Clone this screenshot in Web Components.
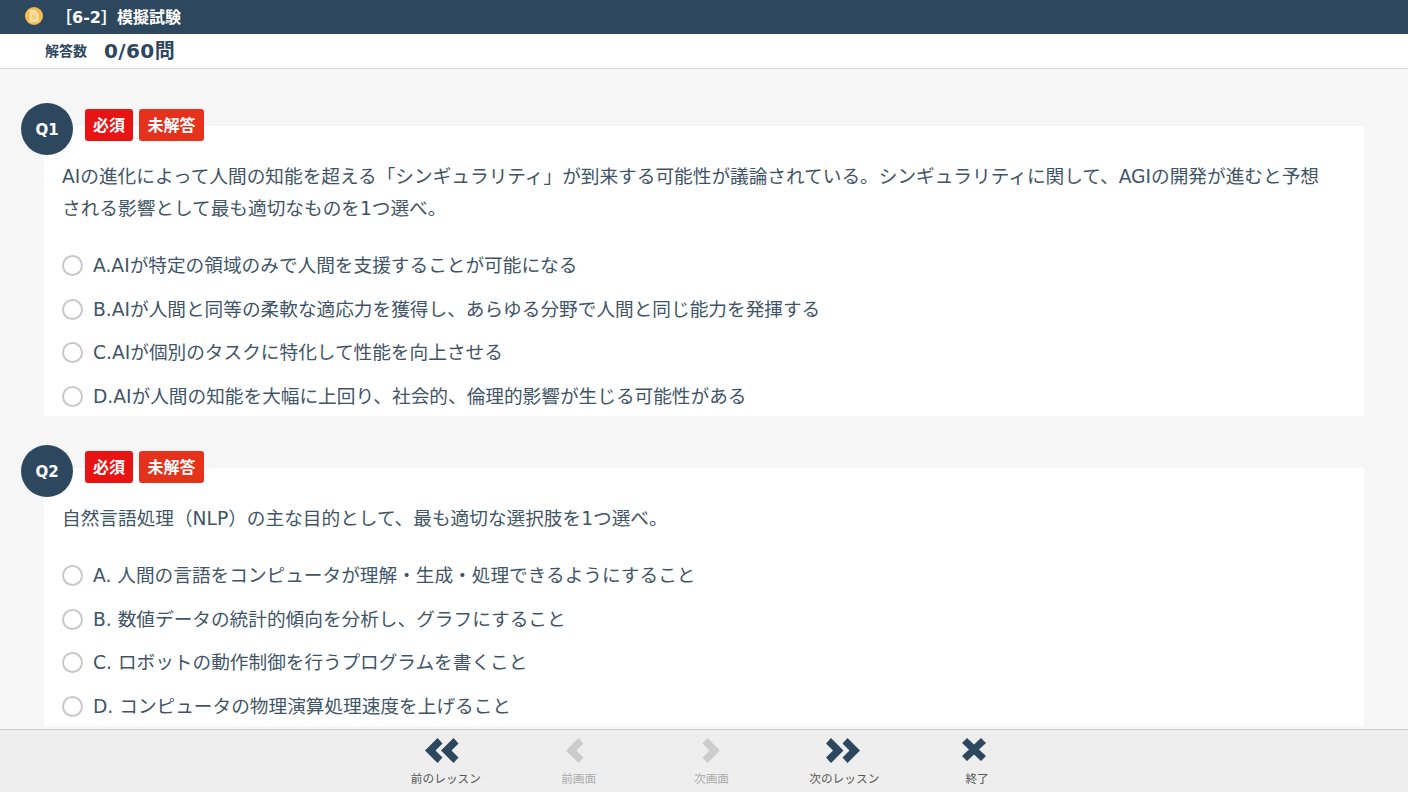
<!DOCTYPE html>
<html lang="ja">
<head>
<meta charset="utf-8">
<title>模擬試験</title>
<style>
  html, body { margin: 0; height: 100%; overflow: hidden; }
  body { font-family: "DejaVu Sans", "Noto Sans CJK JP", sans-serif; color: #2c475e; background: #f6f6f6; }
  exam-app { height: 100vh; }
</style>
</head>
<body>
<exam-app>
  <exam-header slot="header" title-text="［6-2］模擬試験" answered="0/60問"></exam-header>
  <quiz-question number="Q1">
    <span slot="text">AIの進化によって人間の知能を超える「シンギュラリティ」が到来する可能性が議論されている。シンギュラリティに関して、AGIの開発が進むと予想される影響として最も適切なものを1つ選べ。</span>
    <quiz-option>A.AIが特定の領域のみで人間を支援することが可能になる</quiz-option>
    <quiz-option>B.AIが人間と同等の柔軟な適応力を獲得し、あらゆる分野で人間と同じ能力を発揮する</quiz-option>
    <quiz-option>C.AIが個別のタスクに特化して性能を向上させる</quiz-option>
    <quiz-option>D.AIが人間の知能を大幅に上回り、社会的、倫理的影響が生じる可能性がある</quiz-option>
  </quiz-question>
  <quiz-question number="Q2">
    <span slot="text">自然言語処理（NLP）の主な目的として、最も適切な選択肢を1つ選べ。</span>
    <quiz-option>A. 人間の言語をコンピュータが理解・生成・処理できるようにすること</quiz-option>
    <quiz-option>B. 数値データの統計的傾向を分析し、グラフにすること</quiz-option>
    <quiz-option>C. ロボットの動作制御を行うプログラムを書くこと</quiz-option>
    <quiz-option>D. コンピュータの物理演算処理速度を上げること</quiz-option>
  </quiz-question>
  <exam-footer slot="footer"></exam-footer>
</exam-app>

<script>
class ExamApp extends HTMLElement {
  constructor() {
    super();
    this.attachShadow({ mode: 'open' });
  }

  connectedCallback() {
    this.shadowRoot.innerHTML = `
      <style>
        :host { display: flex; flex-direction: column; }
        main {
          flex: 1;
          min-height: 0;
          overflow: hidden;
          padding: 57px 44px 0;
          display: flex;
          flex-direction: column;
          gap: 52px;
        }
      </style>
      <slot name="header"></slot>
      <main><slot></slot></main>
      <slot name="footer"></slot>
    `;
  }
}

class ExamHeader extends HTMLElement {
  constructor() {
    super();
    this.attachShadow({ mode: 'open' });
  }

  connectedCallback() {
    this.shadowRoot.innerHTML = `
      <style>
        :host { display: block; flex: none; }
        .top {
          box-sizing: border-box;
          height: 34px;
          padding: 0 0 2px 25px;
          background: #2c475e;
          color: #fff;
          display: flex;
          align-items: center;
          font-size: 16px;
          font-weight: bold;
        }
        .coin {
          width: 18px;
          height: 18px;
          border-radius: 50%;
          background: #f2bd4e;
          display: flex;
          align-items: center;
          justify-content: center;
          margin-right: 13px;
        }
        .sub {
          box-sizing: border-box;
          height: 35px;
          padding: 0 0 4px 45px;
          background: #fff;
          border-bottom: 1px solid #d8d8d8;
          display: flex;
          align-items: center;
          font-weight: bold;
        }
        .label { font-size: 14px; margin-right: 17px; padding-top: 2px; }
        .count { font-size: 20px; letter-spacing: .4px; }
      </style>
      <div class="top">
        <span class="coin">
          <svg width="10" height="12" viewBox="0 0 10 12"><path d="M1 .5h5.200L9 3.300V11.500H1z" fill="#f8dc9c" stroke="#fbeac4" stroke-width=".8"/><path d="M2.800 6h4.400M2.800 8h4.400" stroke="#e9b64e" stroke-width=".8"/></svg>
        </span>
        <span>${this.getAttribute('title-text')}</span>
      </div>
      <div class="sub">
        <span class="label">解答数</span>
        <span class="count">${this.getAttribute('answered')}</span>
      </div>
    `;
  }
}

class QuizQuestion extends HTMLElement {
  constructor() {
    super();
    this.attachShadow({ mode: 'open' });
  }

  connectedCallback() {
    this.shadowRoot.innerHTML = `
      <style>
        :host { display: block; position: relative; flex: none; background: #fff; color: #3f5567; }
        .num {
          box-sizing: border-box;
          position: absolute;
          left: -23px;
          top: -23px;
          width: 52px;
          height: 52px;
          padding-top: 1px;
          border-radius: 50%;
          background: #2c475e;
          color: #fff;
          font-size: 15px;
          font-weight: bold;
          display: flex;
          align-items: center;
          justify-content: center;
        }
        .badges { position: absolute; left: 41px; top: -17px; display: flex; gap: 6px; }
        .badge {
          box-sizing: border-box;
          height: 32px;
          padding: 0 8.500px 2px;
          border-radius: 3px;
          color: #fff;
          font-size: 16px;
          font-weight: bold;
          display: flex;
          align-items: center;
        }
        .req { background: #e81313; padding: 0 8px 2px; }
        .un { background: #e5321c; }
        .text {
          padding: 35px 30px 0 18px;
          font-size: 18.670px;
          line-height: 32px;
          margin-bottom: 19px;
        }
        .opts { padding: 0 18px; display: flex; flex-direction: column; margin-bottom: -2px; }
      </style>
      <div class="num">${this.getAttribute('number')}</div>
      <div class="badges">
        <span class="badge req">必須</span>
        <span class="badge un">未解答</span>
      </div>
      <div class="text"><slot name="text"></slot></div>
      <div class="opts"><slot></slot></div>
    `;
  }
}

class QuizOption extends HTMLElement {
  constructor() {
    super();
    this.attachShadow({ mode: 'open' });
  }

  connectedCallback() {
    this.shadowRoot.innerHTML = `
      <style>
        :host {
          display: flex;
          align-items: center;
          height: 43.500px;
          font-size: 18.670px;
        }
        .radio {
          flex: none;
          box-sizing: border-box;
          width: 21px;
          height: 21px;
          border-radius: 50%;
          border: 2px solid #c8c8c8;
          background: #fff;
          margin-right: 10px;
        }
        .label { margin-bottom: 4px; }
      </style>
      <span class="radio"></span>
      <span class="label"><slot></slot></span>
    `;
  }
}

class ExamFooter extends HTMLElement {
  constructor() {
    super();
    this.attachShadow({ mode: 'open' });
  }

  connectedCallback() {
    this.shadowRoot.innerHTML = `
      <style>
        :host {
          display: flex;
          flex: none;
          justify-content: center;
          height: 62px;
          padding-left: 15px;
          background: #eee;
          border-top: 1px solid #ccc;
        }
        .btn {
          width: 132.800px;
          display: flex;
          flex-direction: column;
          align-items: center;
          color: #555;
          font-size: 11.700px;
          font-family: "Noto Sans CJK JP", sans-serif;
        }
        .btn.off { color: #aaa; }
        svg { display: block; width: 48px; height: 25px; margin-top: 8px; margin-bottom: 6px; }
        .btn path { fill: #2c475e; }
        .btn.off path { fill: #ccc; }
      </style>
      <div class="btn">
        <svg viewBox="0 0 48 25"><path d="M15.500 0L20.500 5.500 13.500 12.500l7 7-5 5.500L3 12.500z"/><path d="M31.500 0L36.500 5.500 29.500 12.500l7 7-5 5.500L19 12.500z"/></svg>
        <span>前のレッスン</span>
      </div>
      <div class="btn off">
        <svg viewBox="0 0 48 25"><path d="M23.500 0L28.500 5.500 21.500 12.500l7 7-5 5.500L11 12.500z"/></svg>
        <span>前画面</span>
      </div>
      <div class="btn off">
        <svg viewBox="0 0 48 25"><path d="M20.500 0L15.500 5.500 22.500 12.500l-7 7 5 5.500L33 12.500z"/></svg>
        <span>次画面</span>
      </div>
      <div class="btn">
        <svg viewBox="0 0 48 25"><path d="M11 0L6 5.500 13 12.500l-7 7 5 5.500L23.500 12.500z"/><path d="M27.500 0L22.500 5.500 29.500 12.500l-7 7 5 5.500L40 12.500z"/></svg>
        <span>次のレッスン</span>
      </div>
      <div class="btn">
        <svg viewBox="0 0 48 25"><path d="M14 0l7 6.500L28 0l5 5-7 6.500 7 6.500-5 5-7-6.500L14 23l-5-5 7-6.500L9 5z"/></svg>
        <span>終了</span>
      </div>
    `;
  }
}

customElements.define('exam-app', ExamApp);
customElements.define('exam-header', ExamHeader);
customElements.define('quiz-question', QuizQuestion);
customElements.define('quiz-option', QuizOption);
customElements.define('exam-footer', ExamFooter);
</script>
</body>
</html>
